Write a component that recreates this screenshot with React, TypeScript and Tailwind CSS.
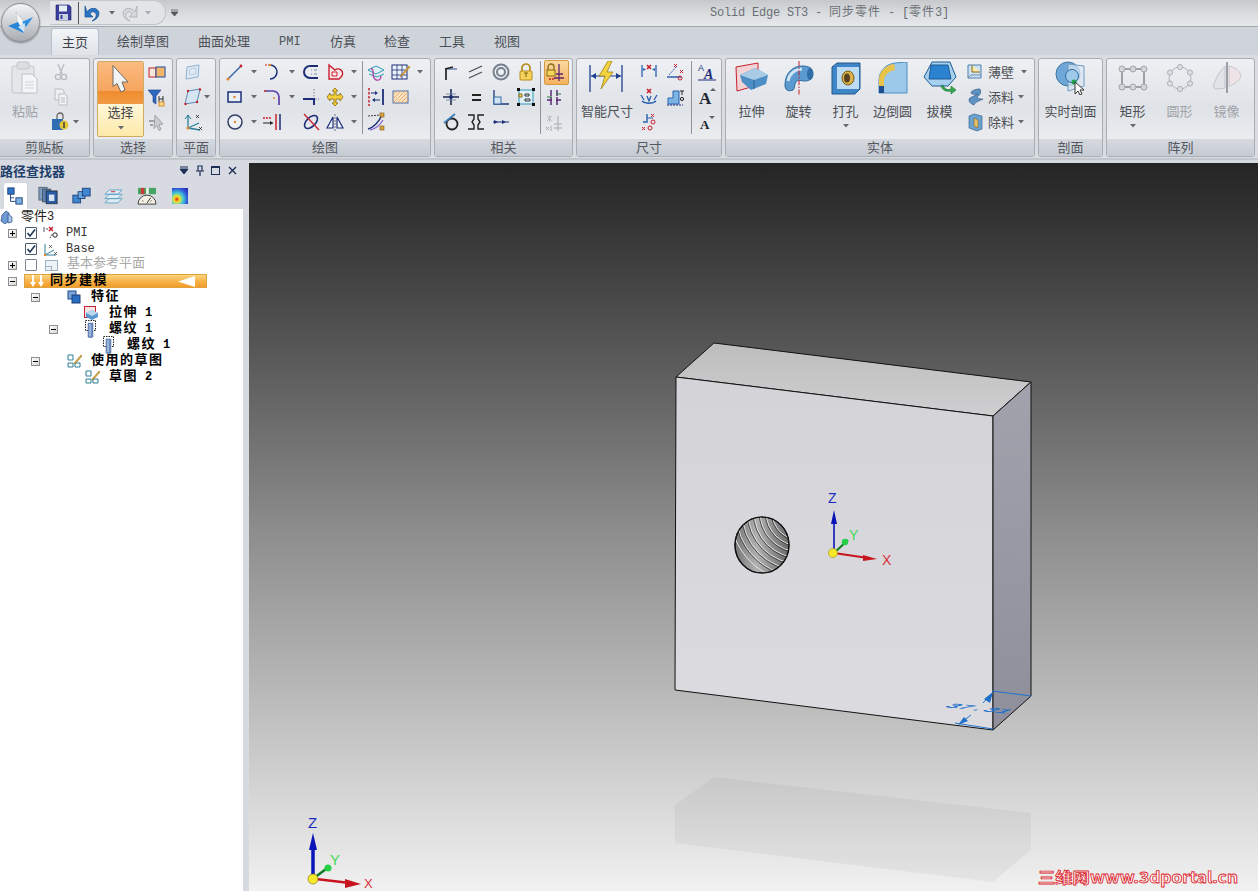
import React from "react";

const N = "#1c2f78";
const R = "#c8202c";
const O = "#e08a2e";
const G = "#b9bcc2";

const S = ({ s = 20, children }: { s?: number; children: React.ReactNode }) => (
  <svg width={s} height={s} viewBox={`0 0 ${s} ${s}`} fill="none" className="block shrink-0">
    {children}
  </svg>
);

const Dd = ({ light }: { light?: boolean }) => (
  <svg width="6" height="4" viewBox="0 0 6 4" className="block shrink-0">
    <path d="M0 0h6L3 3.5z" fill={light ? "#a8acb2" : "#666a70"} />
  </svg>
);

const Cell = ({ c, dd, className = "" }: { c?: React.ReactNode; dd?: boolean; className?: string }) => (
  <div className={"flex h-[25px] items-center justify-start gap-[6px] " + className}>
    {c}
    {dd ? <Dd /> : null}
  </div>
);

const Col = ({ className, children }: { className: string; children: React.ReactNode }) => (
  <div className={"flex shrink-0 flex-col " + className}>{children}</div>
);

const Sep = ({ className = "" }: { className?: string }) => <div className={"mt-[2px] h-[73px] w-px shrink-0 bg-[#8e949c] " + className} />;

const Group = ({ label, className, children }: { label: string; className: string; children: React.ReactNode }) => (
  <div className={"flex h-[99px] shrink-0 flex-col overflow-hidden rounded-[3px] border border-[#a9aeb6] bg-linear-to-b from-[#eef0f3] via-[#dfe2e7] to-[#f1f2f4] " + className}>
    <div className="relative flex h-[80px]">{children}</div>
    <div className="flex h-[17px] items-center justify-center bg-linear-to-b from-[#d5d9df] to-[#c6cbd3] pb-[2px] text-[13px] leading-none text-[#55585e]">{label}</div>
  </div>
);

const Big = ({ icon, label, dd, gray, className = "w-[47px]" }: { icon: React.ReactNode; label: string; dd?: boolean; gray?: boolean; className?: string }) => (
  <div className={"flex shrink-0 flex-col items-center " + className}>
    <div className="flex h-[37px] items-center justify-center">{icon}</div>
    <div className={"mt-[7px] text-[13px] leading-[16px] whitespace-nowrap " + (gray ? "text-[#a0a3a8]" : "text-[#4d5055]")}>{label}</div>
    {dd ? <div className="mt-[5px]"><Dd /></div> : null}
  </div>
);

/* small ribbon icons */
const Ic = {
  scissors: <S><path d="M7 2l4 10M13 2L9 12" stroke={G} strokeWidth="1.4" /><circle cx="7" cy="15" r="2.6" stroke={G} strokeWidth="1.4" /><circle cx="13" cy="15" r="2.6" stroke={G} strokeWidth="1.4" /></S>,
  copy: <S><path d="M4 2h7l2 2v9H4z" fill="#eceef0" stroke={G} /><path d="M8 7h6l2 2v9H8z" fill="#f3f4f5" stroke={G} /><path d="M10 11h4M10 13h4M10 15h4" stroke={G} /></S>,
  painter: <S><rect x="1" y="7" width="11" height="11" fill="#2f6db3" /><path d="M6 7V4a3 3 0 0 1 6 0v3" stroke="#666" strokeWidth="1.3" /><circle cx="13" cy="13" r="4.5" fill="#e3c63c" /><path d="M13 10v6" stroke="#333" strokeWidth="1.4" /></S>,
  selSets: <S><rect x="2" y="6" width="7" height="9" fill="#f4e6d8" stroke={R} /><rect x="9" y="5" width="9" height="10" fill="#f2b56c" stroke="#1f4aa0" /></S>,
  funnel: <S><path d="M1 3h13L9 9v8l-3-2V9z" fill="#2f68c0" stroke="#1c3d84" strokeWidth=".6" /><path d="M12 9v6M16 9v6M12 12h4" stroke="#333" /><rect x="12" y="15" width="5" height="4" fill="#f7d98c" stroke={O} /></S>,
  grayArrow: <S><path d="M8 3l8 9-4 .5 2 5-2 1-2-5-3 3z" fill="#c9ccd1" stroke="#9ea2a8" /><path d="M2 9h5M3 13h3" stroke="#9ea2a8" strokeWidth="2" /></S>,
  plane1: <S><path d="M4 5l12-2-1 12-12 2z" fill="#dfe9f3" stroke="#8db1d2" /><path d="M7 7l6-1-.5 6-6 1z" stroke="#b9cfe2" /></S>,
  plane2: <S><path d="M5 4l12-2-3 13L2 17z" fill="#d6e4f1" stroke="#5a8bb9" /><circle cx="5" cy="4" r="1.2" fill={R} /><circle cx="17" cy="2.5" r="1.2" fill={R} /><circle cx="14" cy="15" r="1.2" fill={R} /><circle cx="2.5" cy="17" r="1.2" fill={R} /></S>,
  triad: <S><path d="M5 16V3M5 16l11-5M5 16l12 2" stroke="#2a7f9a" strokeWidth="1.3" /><path d="M2 7l3-4 3 4" stroke="#2a7f9a" /><circle cx="5" cy="16" r="1.6" fill={O} /><path d="M13 3l3 3M16 3l-3 3M16 15l3 3M19 15l-3 3" stroke="#222" strokeWidth=".8" /></S>,
  line: <S><path d="M3 17L16 4" stroke="#3566a8" strokeWidth="1.5" /><circle cx="3" cy="17" r="1.6" fill={O} /><circle cx="16" cy="4" r="1.4" fill={R} /></S>,
  arc: <S><path d="M2 3h5" stroke={R} strokeDasharray="2 1" /><path d="M7 3a7 7 0 0 1 0 14" stroke={N} strokeWidth="1.5" /><circle cx="7" cy="3" r="1.2" fill={O} /></S>,
  cshape: <S><path d="M17 4H9a6 6 0 0 0 0 12h8" stroke={N} strokeWidth="2" /><path d="M10 8h1M10 12h1M13 8h3M13 12h3" stroke="#7c8a9a" /></S>,
  heart: <S><path d="M4 3l6 5a4.500 4.500 0 0 1 6 7l-2 2H4z" fill="#fbe6ea" stroke={R} strokeWidth="1.4" /><path d="M7 10h5v4H7z" stroke={R} /></S>,
  rect: <S><rect x="3" y="5" width="13" height="10" fill="#eaf0f6" stroke={N} strokeWidth="1.5" /><circle cx="9.500" cy="10" r="1.300" fill={O} /></S>,
  fillet: <S><path d="M2 4h8a6 6 0 0 1 6 6v8" stroke="#5b3fa8" strokeWidth="1.7" /><circle cx="11" cy="11" r="1" fill={O} /><circle cx="2" cy="4" r="1" fill={R} /></S>,
  trim: <S><path d="M2 12h11v6" stroke={N} strokeWidth="2" /><path d="M13 2v8M14 12h4" stroke="#78808c" strokeDasharray="1.500 1.500" /></S>,
  move: <S><path d="M10 1l3 3h-2v4h4V6l3 4-3 4v-2h-4v4h2l-3 3-3-3h2v-4H5v2l-3-4 3-4v2h4V4H7z" fill="#f4cf3a" stroke="#8c6d12" strokeWidth=".8" /></S>,
  circle: <S><circle cx="10" cy="10" r="7" fill="#eef2f6" stroke="#333f66" strokeWidth="1.5" /><circle cx="10" cy="10" r="1.200" fill={O} /></S>,
  offset: <S><path d="M0 6h9" stroke={R} strokeWidth="1.500" strokeDasharray="2 1" /><path d="M0 11h10" stroke="#222" strokeWidth="1.200" /><path d="M7 9l3 2-3 2z" fill="#222" /><path d="M13 2v16" stroke={R} strokeWidth="1.500" /><path d="M17 2v16" stroke={N} strokeWidth="1.500" /></S>,
  xout: <S><ellipse cx="10" cy="10" rx="8" ry="4.500" transform="rotate(-45 10 10)" stroke={N} strokeWidth="1.600" /><path d="M3 2l15 16" stroke={R} strokeWidth="1.300" /></S>,
  mirror: <S><path d="M8 5v11H2zM12 5v11h6z" stroke={N} strokeWidth="1.200" fill="#eef2f7" /><path d="M10 2v17" stroke="#6b7280" strokeDasharray="2 1" /></S>,
  sketchp: <S><path d="M2 8l8-4 8 4-8 4z" fill="#dff0f4" stroke="#2e9ab5" /><path d="M3 12l8 3 7-3" stroke="#2e9ab5" /><path d="M5 6c5 3-1 8 5 12 4 1 5-2 5-4" stroke="#b33fa8" strokeWidth="1.300" /></S>,
  table: <S><rect x="1" y="3" width="15" height="14" fill="#eef4fb" stroke={N} /><path d="M1 8h15M1 13h15M6 3v14M11 3v14" stroke={N} strokeWidth=".8" /><path d="M18 4l-7 8-2 3 3-2 7-8z" fill="#eab33f" stroke="#9c6b12" strokeWidth=".6" /></S>,
  project: <S><path d="M3 1v18" stroke={R} strokeWidth="1.500" strokeDasharray="2.500 1.500" /><path d="M17 2v16" stroke={N} strokeWidth="1.800" /><path d="M5 6h5M14 13H8" stroke={N} strokeWidth="1.200" /><path d="M9 4l3 2-3 2zM9 11l-3 2 3 2z" fill={N} /></S>,
  hatch: <S><rect x="2" y="4" width="15" height="12" fill="#f8e2bd" stroke="#4a6fa5" /><path d="M2 8l4-4M2 12l8-8M2 16l12-12M6 16l11-11M10 16l7-7M14 16l3-3" stroke="#e0a168" strokeWidth=".8" /></S>,
  curve: <S><path d="M2 17C7 16 13 10 16 3" stroke={N} strokeWidth="1.500" /><path d="M4 18c6-1 10-5 13-10" stroke="#8c6bd0" strokeWidth="1.400" /><path d="M2 4l13-1" stroke="#3a3f4a" strokeDasharray="2 1" /><rect x="14" y="1" width="4" height="4" fill="#d9a13f" stroke="#7a5a10" strokeWidth=".6" /><rect x="14" y="14" width="4" height="4" fill="#d9a13f" stroke="#7a5a10" strokeWidth=".6" /></S>,
  r1: <S><path d="M5 18V7" stroke="#222" strokeWidth="1.700" /><path d="M5 7h11" stroke="#2d4f96" strokeWidth="1.200" /><path d="M4 7l8-2" stroke="#222" strokeWidth="1.300" /></S>,
  r2: <S><path d="M3 10L16 4M3 16L16 10" stroke="#4b4f57" strokeWidth="1.300" /></S>,
  r3: <S><circle cx="10" cy="10" r="7.500" stroke="#77808f" strokeWidth="2" /><circle cx="10" cy="10" r="4" fill="#eef1f5" stroke="#77808f" strokeWidth="2" /></S>,
  lock: <S><path d="M6 9V6a4 4 0 0 1 8 0v3" stroke="#b68a1a" strokeWidth="1.700" /><rect x="4" y="9" width="12" height="9" rx="1" fill="#f6d259" stroke="#b68a1a" /><path d="M10 11v4M8 11h4" stroke="#7a5a10" /></S>,
  lockrel: <S><path d="M3 7V4a3 3 0 0 1 6 0v3" stroke="#8a6a14" strokeWidth="1.300" /><rect x="2" y="7" width="8" height="6" fill="#f4d65a" stroke="#8a6a14" /><path d="M14 1v17M9 15h10M11 11h7" stroke="#5a2a72" strokeWidth="1.300" /><path d="M4 16h6" stroke={R} strokeDasharray="2 1" strokeWidth="1.300" /></S>,
  r4: <S><path d="M10 2v16M2 10h16" stroke="#1d2a52" strokeWidth="1.600" /><circle cx="10" cy="10" r="2" fill={N} /><path d="M5 7h10M5 13h10" stroke="#6f7c9c" strokeWidth=".8" /></S>,
  eq: <S><path d="M6 8h9M6 13h9" stroke="#222" strokeWidth="2.200" /></S>,
  r5: <S><path d="M3 3v14h15" stroke="#1d3a7a" strokeWidth="1.300" /><rect x="3" y="10" width="7" height="7" fill="#cfe3f2" stroke="#3a6ea5" /></S>,
  rr6: <S><rect x="3" y="3" width="14" height="14" fill="#dff0f8" stroke="#2e9ab5" /><rect x="1" y="1" width="3" height="3" fill="#111" /><rect x="16" y="1" width="3" height="3" fill="#111" /><rect x="1" y="16" width="3" height="3" fill="#111" /><rect x="16" y="16" width="3" height="3" fill="#111" /><path d="M3 8v-1h3v3H3z" fill="#f4d65a" stroke="#8a6a14" /><path d="M9 7h4v2H9zM9 12h5v2H9z" stroke="#333" /></S>,
  tang: <S><circle cx="11" cy="12" r="5.500" stroke="#222" strokeWidth="1.800" /><path d="M3 11L14 2" stroke="#3f7fb5" strokeWidth="1.800" /></S>,
  sym: <S><path d="M2 3h6v4L6 10l2 3v4H2M18 3h-6v4l2 3-2 3v4h6" stroke="#222" strokeWidth="1.400" /></S>,
  colin: <S><path d="M2 10h16" stroke={N} strokeWidth="1.200" /><path d="M3 8l4 2-4 2zM11 8l4 2-4 2z" fill={N} /></S>,
  rel2: <S><path d="M7 2v6M13 2v6M3 12h5M12 12h5M7 9v8M13 9v8" stroke="#5a2a72" strokeWidth="1.500" /><path d="M3 9h5M12 6h5" stroke="#2a7d3a" /></S>,
  rel3: <S><path d="M14 3v15M10 11h8M10 15h8" stroke="#a6a9b0" /><path d="M3 3l5 5M8 3l-5 5M5.500 2v7" stroke="#b8bbc0" /><path d="M2 14l3 3M5 14l-3 3M7 13v5" stroke="#a6a9b0" /></S>,
  d1: <S><path d="M3 3v12M17 3v12" stroke="#2b60b0" strokeWidth="1.300" /><path d="M4 6l3 1.500-3 1.500zM16 6l-3 1.500 3 1.500z" fill="#2b60b0" /><path d="M8 3l4 4M12 3L8 7" stroke={R} strokeWidth="1.600" /></S>,
  d2: <S><path d="M2 15h14" stroke="#2b60b0" strokeWidth="1.300" /><path d="M4 13L12 4" stroke="#2b60b0" strokeDasharray="2 1" /><path d="M9 2l3 3M12 2L9 5M15 8l3 3M18 8l-3 3" stroke={R} /><circle cx="15" cy="16" r="2" stroke={R} /></S>,
  d3: <S><path d="M3 14c3 3 11 3 14 0" stroke="#2b60b0" strokeWidth="1.300" /><path d="M2 8l3 5M18 8l-3 5M8 9l2 5 2-5" stroke="#2b60b0" strokeWidth="1.300" /><path d="M8 2l4 4M12 2L8 6" stroke={R} strokeWidth="1.600" /></S>,
  d4: <S><path d="M3 17V11h5V4h6v13z" fill="#7cb5e4" stroke="#2b60b0" /><path d="M2 18h16" stroke={N} strokeDasharray="2 1" /><path d="M15 4h4M17 4v4" stroke="#222" /><circle cx="17" cy="12" r="1.600" stroke="#222" /></S>,
  d5: <S><path d="M8 2v8H4" stroke="#2b60b0" strokeWidth="1.400" /><path d="M8 6h6" stroke="#2b60b0" /><path d="M12 2l3 3M15 2l-3 3M3 15l3 3M6 15l-3 3" stroke={R} /><circle cx="14" cy="10" r="2" stroke={R} /><circle cx="11" cy="16" r="2" stroke={R} /></S>,
  tfont: <S><text x="1" y="9" fontSize="9" fill="#1c2f78" fontFamily="Liberation Sans">A</text><text x="7" y="17" fontSize="14" fontWeight="700" fontStyle="italic" fill="#1c2f78" fontFamily="Liberation Serif">A</text><path d="M1 18h18" stroke="#1c2f78" /></S>,
  bigA: <S><text x="2" y="17" fontSize="17" fontWeight="700" fill="#1d2430" fontFamily="Liberation Serif">A</text><path d="M13 4l3-3 3 3z" fill="#5b6470" /></S>,
  smA: <S><text x="3" y="17" fontSize="13" fontWeight="700" fill="#1d2430" fontFamily="Liberation Serif">A</text><path d="M12 4h6l-3 3z" fill="#5b6470" /></S>,
  thin: <S><path d="M2 3h13v13H2z" fill="#cfe2f2" stroke="#4b7fae" /><path d="M6 3v7h8" fill="#f6e9a8" stroke="#8a6a14" /><path d="M2 16l3-3h10" stroke="#6b8fb3" /></S>,
  add: <S><path d="M14 2c-5 0-9 2-9 4 0 1 4 2 7 1-3 2-9 3-9 6 0 2 2 4 5 5 1-3 5-4 9-6-5 0-5-1-6-2 2-1 5-4 3-8z" fill="#5f93c4" stroke="#274f78" strokeWidth=".6" /></S>,
  cut: <S><path d="M3 4l5-2 8 2v13l-5 2-8-3z" fill="#6ba2d0" stroke="#2d5d8a" strokeWidth=".6" /><path d="M8 6l4 2v8l-4-2z" fill="#e4c068" stroke="#7a5a10" strokeWidth=".5" /></S>,
};

const Gr = (id: string, a: string, b: string) => (
  <linearGradient id={id} x1="0" y1="0" x2="0" y2="1"><stop offset="0" stopColor={a} /><stop offset="1" stopColor={b} /></linearGradient>
);

const BigIc = {
  paste: <svg width="28" height="34" viewBox="0 0 28 34" fill="none" className="block"><rect x="1" y="5" width="22" height="27" rx="2" fill="#e4e6e9" stroke="#c1c4c9" /><rect x="6" y="1" width="12" height="7" rx="2" fill="#dcdfe2" stroke="#c1c4c9" /><path d="M11 13h10l5 5v14H11z" fill="#f4f5f6" stroke="#c1c4c9" /><path d="M14 21h9M14 24h9M14 27h9" stroke="#d0d3d7" /></svg>,
  cursor: <svg width="17" height="28" viewBox="0 0 17 28" className="block"><path d="M1 0.500V21.500L5 18.500L9 27L13 25L10 17H16Z" fill="#f2f3f5" stroke="#6f6a66" strokeWidth="1" /></svg>,
  dim: <svg width="36" height="34" viewBox="0 0 36 34" fill="none" className="block"><path d="M1 4v27M33 4v27" stroke="#1d3f8f" strokeWidth="1.300" /><path d="M2 15h30" stroke="#1d3f8f" /><path d="M2 15l5-3v6zM32 15l-5-3v6z" fill="#1d3f8f" /><path d="M19 0l-9 15h6l-4 13 12-17h-6l5-11z" fill="#f3d33f" stroke="#9c8216" strokeWidth=".8" /></svg>,
  extrude: <svg width="34" height="32" viewBox="0 0 34 32" fill="none" className="block"><path d="M1 5L23 1v22L2 29z" fill="#f2d3d6" stroke={R} /><path d="M5 13l15-7 13 7-2 9-15 6-9-8z" fill="#4d8ec6" /><path d="M5 13l15-7 13 7-14 5z" fill="#a9cbe6" /><path d="M19 18v9" stroke="#2f6393" /></svg>,
  revolve: <svg width="34" height="34" viewBox="0 0 34 34" fill="none" className="block"><path d="M3 24c0-12 8-19 17-19 7 0 11 2 11 8 0 4-3 7-8 7-4 0-7-2-9 1-2 2-1 7-3 8-5 2-8 0-8-5z" fill="#5b9ad0" stroke="#2b6aa0" /><path d="M6 20c1-7 7-12 14-12" stroke="#cfe4f4" strokeWidth="3" /><ellipse cx="28" cy="13" rx="3" ry="6" fill="#2f6ea8" /><path d="M17 0v34" stroke={R} strokeDasharray="5 1.500 1.500 1.500" /></svg>,
  hole: <svg width="30" height="34" viewBox="0 0 30 34" fill="none" className="block"><path d="M1 6l5-4h23v26l-5 5H1z" fill="#3f86c8" stroke="#25598a" /><path d="M6 6h22v22H6z" fill="#bcdcf4" /><ellipse cx="17" cy="17" rx="6" ry="7" fill="#d9b24b" stroke="#7a5a10" /><ellipse cx="16" cy="17" rx="3" ry="4.500" fill="#5a4320" /></svg>,
  fillet: <svg width="30" height="32" viewBox="0 0 30 32" fill="none" className="block"><path d="M1 31V18C1 9 8 2 17 1l12-1v31z" fill="#9cc8ea" stroke="#4d8fc6" /><path d="M1 31V18C1 9 8 3 16 2l1 6C11 9 6 13 6 19v12z" fill="#e9c24a" /><path d="M1 24h5v7H1z" fill="#1d4c91" /></svg>,
  draft: <svg width="34" height="34" viewBox="0 0 34 34" fill="none" className="block"><path d="M1 16L9 1h18l6 15-8 9H9z" fill="#a6d0ee" stroke="#1f5b93" /><path d="M8 4h17l3 14H6z" fill="#2b82d0" stroke="#1f5b93" /><path d="M20 24c2 5 5 5 8 4v-3l5 4-5 4v-3c-5 1-9-1-10-5z" fill="#36a853" stroke="#1c6e30" strokeWidth=".6" /></svg>,
  section: <svg width="32" height="34" viewBox="0 0 32 34" fill="none" className="block"><circle cx="13" cy="13" r="12" fill="#6fa8d8" stroke="#3f76a4" /><path d="M13 3l16 2v20l-16 5z" fill="#d8e6f2" fillOpacity=".75" stroke="#6f9dc2" /><circle cx="17" cy="15" r="6.500" fill="#9fc9e8" stroke="#2b6a9e" /><circle cx="19" cy="21" r="2.500" fill="#22a04b" /><path d="M20 21v12l3-3 2 4 2-1-2-4h4z" fill="#fff" stroke="#222" strokeWidth=".9" /></svg>,
  rectP: <svg width="30" height="26" viewBox="0 0 30 26" fill="none" className="block"><rect x="4" y="4" width="22" height="18" stroke="#55585f" /><g fill="#d2d5da" stroke="#a2a6ad"><circle cx="4" cy="4" r="3" /><circle cx="15" cy="4" r="3" /><circle cx="26" cy="4" r="3" /><circle cx="4" cy="22" r="3" /><circle cx="15" cy="22" r="3" /><circle cx="26" cy="22" r="3" /></g></svg>,
  circP: <svg width="28" height="28" viewBox="0 0 28 28" fill="none" className="block"><circle cx="14" cy="14" r="11" stroke="#b0b3b9" /><g fill="#dcdee2" stroke="#aeb1b7"><circle cx="14" cy="3" r="2.600" /><circle cx="24" cy="8.500" r="2.600" /><circle cx="24" cy="19.500" r="2.600" /><circle cx="14" cy="25" r="2.600" /><circle cx="4" cy="19.500" r="2.600" /><circle cx="4" cy="8.500" r="2.600" /></g></svg>,
  mirrorP: <svg width="32" height="32" viewBox="0 0 32 32" fill="none" className="block"><path d="M14 4v22l-8 1c-3 0-4-2-3-5 2-6 5-12 11-18z" fill="#e2e3e8" stroke="#c2c4ca" /><path d="M18 4c5 1 10 4 12 9 0 4-5 9-12 11z" fill="#eee4e8" stroke="#c9c6cc" /><path d="M16 0v31" stroke="#9b9ea4" strokeWidth="2" /></svg>,
};

/* tree */
const Exp = ({ minus, className = "" }: { minus?: boolean; className?: string }) => (
  <div className={"relative h-[9px] w-[9px] shrink-0 border border-[#8b8f95] bg-linear-to-br from-white to-[#d6d6d0] " + className}>
    <div className="absolute top-[3px] left-[1px] h-px w-[5px] bg-black" />
    {minus ? null : <div className="absolute top-[1px] left-[3px] h-[5px] w-px bg-black" />}
  </div>
);

const Chk = ({ on, className = "" }: { on?: boolean; className?: string }) => (
  <div className={"flex h-[12px] w-[12px] shrink-0 items-center justify-center rounded-[1px] border border-[#4d5a6a] bg-white " + className}>
    {on ? <svg width="10" height="10" viewBox="0 0 10 10" fill="none"><path d="M1.500 5l2.500 3 5-6.500" stroke="#1d3557" strokeWidth="1.600" /></svg> : null}
  </div>
);

const sk = (
  <svg width="15" height="14" viewBox="0 0 15 14" fill="none" className="block shrink-0"><path d="M1 1h5v5H1zM1 9h5v4H1zM8 9h5v4H8z" stroke="#2e7d96" /><path d="M14 1L8 8l-1 2 2-1 6-7z" fill="#e8b33f" stroke="#7a5a10" strokeWidth=".5" /></svg>
);
const thread = (
  <svg width="12" height="18" viewBox="0 0 12 18" fill="none" className="block shrink-0"><rect x=".5" y=".5" width="10" height="10" stroke="#222" strokeDasharray="1.500 1" /><path d="M3 3h5v14l-2.500 1L3 17z" fill="#6f8fc0" stroke="#4a6a9a" strokeWidth=".5" /><path d="M5 4v12" stroke="#c8d8ee" /></svg>
);
const fea = (
  <svg width="14" height="14" viewBox="0 0 14 14" fill="none" className="block shrink-0"><rect x="1" y="1" width="8" height="8" fill="#7fa8d8" stroke="#1f4a8a" /><rect x="5" y="5" width="8" height="8" fill="#2a6ec4" stroke="#1f3d7a" /></svg>
);

const RibbonTab = ({ children, className }: { children: React.ReactNode; className: string }) => (
  <div className={"text-[13px] leading-[28px] text-[#4d5157] whitespace-nowrap " + className}>{children}</div>
);

const treeBold = "mb-[2px] text-[13px] font-bold tracking-[1.500px] text-black whitespace-pre leading-none";
const One = ({ t }: { t: string }) => <span className="ml-[7px] font-['Liberation_Mono',monospace] text-[12px] tracking-normal">{t}</span>;

export default function App() {
  return (
    <div className="flex h-[891px] w-[1258px] flex-col overflow-hidden bg-[#d7dbe1] font-['Noto_Sans_CJK_SC',sans-serif]">
      {/* title bar */}
      <div className="relative flex h-[27px] shrink-0 items-center border-b border-[#a3a9b0] bg-linear-to-b from-[#c6c8cb] via-[#d9dcdf] to-[#e6e8ea]">
        <div className="ml-[50px] flex h-[24px] w-[116px] items-center rounded-r-[12px] border-r border-b border-[#bfc3c8] bg-[#e2e4e7] pl-[5px]">
          <svg width="17" height="17" viewBox="0 0 17 17" className="block shrink-0"><path d="M1 1h13l2 2v13H1z" fill="#3a3f9c" stroke="#1f2366" strokeWidth=".6" /><rect x="4" y="1.500" width="8" height="6" fill="#e8eef6" /><rect x="4" y="10" width="9" height="6" fill="#c9d2e0" /><rect x="5.500" y="11" width="2" height="4" fill="#3a3f9c" /></svg>
          <div className="ml-[6px] h-[22px] w-px bg-[#555]" />
          <svg width="18" height="18" viewBox="0 0 18 18" fill="none" className="ml-[5px] block shrink-0"><path d="M3 8c3-5 11-5 12 1 0 4-3 7-7 8 3-2 5-5 4-7-1-3-5-3-6 0l3 3H1V2z" fill="#2b74c4" stroke="#154d8f" strokeWidth=".7" /></svg>
          <div className="ml-[7px]"><Dd /></div>
          <svg width="18" height="18" viewBox="0 0 18 18" fill="none" className="ml-[5px] block shrink-0"><path d="M15 8C12 3 4 3 3 9c0 4 3 7 7 8-3-2-5-5-4-7 1-3 5-3 6 0l-3 3h8V2z" fill="#d5d8dc" stroke="#a9adb3" strokeWidth=".8" /></svg>
          <div className="ml-[7px]"><Dd light /></div>
        </div>
        <svg width="8" height="8" viewBox="0 0 8 8" className="ml-[5px] block shrink-0"><path d="M0 1h7M0 3h7l-3.500 4z" stroke="#555" strokeWidth=".8" fill="#555" /></svg>
        <div className="ml-[531px] font-['Liberation_Mono','Noto_Sans_CJK_SC',monospace] text-[12px] tracking-[-0.2px] whitespace-pre text-[#6b6f75]">
          {"Solid Edge ST3 - "}<span className="tracking-[1px]">同步零件</span>{" - ["}<span className="tracking-[1px]">零件</span>{"3]"}
        </div>
      </div>

      {/* app button */}
      <div className="absolute top-[3px] left-[1px] z-10 flex h-[39px] w-[39px] items-center justify-center rounded-full border border-[#8a8d92] bg-linear-to-b from-[#f4f5f6] to-[#a9adb3] shadow-[0_1px_2px_rgba(0,0,0,0.4)]">
        <svg width="27" height="24" viewBox="0 0 27 24" className="block"><path d="M9 1L18 12L11 16Z" fill="#f7f7f7" stroke="#b5b8bc" strokeWidth=".5" /><path d="M1 15L11 11L17 22Z" fill="#2a86d8" /><path d="M26 6L15 11L19 16Z" fill="#2f90e2" /><path d="M11 16L18 12L17 21Z" fill="#cfe5f7" /></svg>
      </div>

      {/* tabs */}
      <div className="flex h-[28px] shrink-0 items-end bg-[#cfd4db]">
        <div className="ml-[51px] h-[27px] w-[48px] rounded-t-[3px] border border-b-0 border-[#b7c0ca] bg-linear-to-b from-[#f2f5f8] to-[#dfe3e8] text-center text-[13px] leading-[26px] text-[#3d4046]">主页</div>
        <RibbonTab className="ml-[18px] w-[52px]">绘制草图</RibbonTab>
        <RibbonTab className="ml-[29px] w-[52px]">曲面处理</RibbonTab>
        <div className="ml-[29px] w-[22px] self-start pt-[2px] font-['Liberation_Mono',monospace] text-[12px] leading-[26px] whitespace-nowrap text-[#4d5157]">PMI</div>
        <RibbonTab className="ml-[29px] w-[26px]">仿真</RibbonTab>
        <RibbonTab className="ml-[28px] w-[26px]">检查</RibbonTab>
        <RibbonTab className="ml-[29px] w-[26px]">工具</RibbonTab>
        <RibbonTab className="ml-[29px] w-[26px]">视图</RibbonTab>
      </div>

      {/* ribbon */}
      <div className="flex h-[105px] shrink-0 gap-[3px] border-b-[2px] border-[#c3c6cb] bg-[#d9dde2] pt-[3px]">
        <Group label="剪贴板" className="w-[90px] rounded-l-none border-l-0">
          <Big gray icon={BigIc.paste} label="粘贴" className="ml-[1px] w-[48px]" />
          <Col className="ml-[2px] w-[38px]">
            <Cell c={Ic.scissors} />
            <Cell c={Ic.copy} />
            <Cell c={Ic.painter} dd className="!gap-[2px]" />
          </Col>
        </Group>
        <Group label="选择" className="w-[80px]">
          <div className="mt-[2px] ml-[3px] flex h-[76px] w-[47px] shrink-0 flex-col items-center overflow-hidden rounded-[2px] border border-[#d0ab63]">
            <div className="flex h-[42px] w-full justify-center bg-[linear-gradient(#fbbb80_0%,#f6a55e_68%,#ee8c2e_68%,#f39a45_100%)] pt-[3px]">{BigIc.cursor}</div>
            <div className="flex w-full flex-1 flex-col items-center bg-linear-to-b from-[#fff7d8] to-[#fde9a9]">
              <div className="text-[13px] leading-[16px] text-[#44474c]">选择</div>
              <div className="mt-[6px]"><Dd /></div>
            </div>
          </div>
          <Col className="ml-[3px] w-[22px]">
            <Cell c={Ic.selSets} />
            <Cell c={Ic.funnel} />
            <Cell c={Ic.grayArrow} />
          </Col>
        </Group>
        <Group label="平面" className="w-[40px]">
          <Col className="ml-[6px] w-[33px]">
            <Cell c={Ic.plane1} />
            <Cell c={Ic.plane2} dd className="!gap-[1px]" />
            <Cell c={Ic.triad} />
          </Col>
        </Group>
        <Group label="绘图" className="w-[212px]">
          <Col className="ml-[5px] w-[38px]">
            <Cell c={Ic.line} dd />
            <Cell c={Ic.rect} dd />
            <Cell c={Ic.circle} dd />
          </Col>
          <Col className="w-[38px]">
            <Cell c={Ic.arc} dd />
            <Cell c={Ic.fillet} dd />
            <Cell c={Ic.offset} />
          </Col>
          <Col className="w-[24px]">
            <Cell c={Ic.cshape} />
            <Cell c={Ic.trim} />
            <Cell c={Ic.xout} />
          </Col>
          <Col className="w-[37px]">
            <Cell c={Ic.heart} dd />
            <Cell c={Ic.move} dd />
            <Cell c={Ic.mirror} dd />
          </Col>
          <Sep />
          <Col className="ml-[3px] w-[25px]">
            <Cell c={Ic.sketchp} />
            <Cell c={Ic.project} />
            <Cell c={Ic.curve} />
          </Col>
          <Col className="w-[30px]">
            <Cell c={Ic.table} dd />
            <Cell c={Ic.hatch} />
          </Col>
        </Group>
        <Group label="相关" className="w-[139px]">
          <Col className="ml-[6px] w-[25px]"><Cell c={Ic.r1} /><Cell c={Ic.r4} /><Cell c={Ic.tang} /></Col>
          <Col className="w-[25px]"><Cell c={Ic.r2} /><Cell c={Ic.eq} /><Cell c={Ic.sym} /></Col>
          <Col className="w-[25px]"><Cell c={Ic.r3} /><Cell c={Ic.r5} /><Cell c={Ic.colin} /></Col>
          <Col className="w-[24px]"><Cell c={Ic.lock} /><Cell c={Ic.rr6} /></Col>
          <Sep />
          <Col className="ml-[3px] mt-[1px] w-[25px]">
            <Cell c={Ic.lockrel} className="justify-center rounded-[2px] border border-[#d59a3f] bg-linear-to-b from-[#fbd9a0] to-[#f5b25f]" />
            <Cell c={Ic.rel2} className="justify-center" />
            <Cell c={Ic.rel3} className="justify-center" />
          </Col>
        </Group>
        <Group label="尺寸" className="w-[146px]">
          <Big icon={BigIc.dim} label="智能尺寸" className="ml-[3px] w-[54px]" />
          <Col className="ml-[5px] w-[26px]"><Cell c={Ic.d1} /><Cell c={Ic.d3} /><Cell c={Ic.d5} /></Col>
          <Col className="w-[26px]"><Cell c={Ic.d2} /><Cell c={Ic.d4} /></Col>
          <Sep />
          <Col className="ml-[5px] w-[22px]"><Cell c={Ic.tfont} /><Cell c={Ic.bigA} /><Cell c={Ic.smA} /></Col>
        </Group>
        <Group label="实体" className="w-[310px]">
          <Big icon={BigIc.extrude} label="拉伸" className="ml-[2px] w-[47px]" />
          <Big icon={BigIc.revolve} label="旋转" />
          <Big icon={BigIc.hole} label="打孔" dd />
          <Big icon={BigIc.fillet} label="边倒圆" />
          <Big icon={BigIc.draft} label="拔模" />
          <Col className="ml-[3px]">
            <div className="flex h-[25px] items-center"><div className="flex w-[21px] shrink-0">{Ic.thin}</div><span className="ml-[1px] text-[13px] text-[#4d5055]">薄壁</span><span className="ml-[7px]"><Dd /></span></div>
            <div className="flex h-[25px] items-center"><div className="flex w-[21px] shrink-0">{Ic.add}</div><span className="ml-[1px] text-[13px] text-[#4d5055]">添料</span><span className="ml-[4px]"><Dd /></span></div>
            <div className="flex h-[25px] items-center"><div className="flex w-[21px] shrink-0">{Ic.cut}</div><span className="ml-[1px] text-[13px] text-[#4d5055]">除料</span><span className="ml-[4px]"><Dd /></span></div>
          </Col>
        </Group>
        <Group label="剖面" className="w-[65px]">
          <Big icon={BigIc.section} label="实时剖面" className="ml-[5px] w-[53px]" />
        </Group>
        <Group label="阵列" className="w-[149px]">
          <Big icon={BigIc.rectP} label="矩形" dd className="ml-[2px] w-[47px]" />
          <Big gray icon={BigIc.circP} label="圆形" />
          <Big gray icon={BigIc.mirrorP} label="镜像" />
        </Group>
      </div>

      {/* main */}
      <div className="flex min-h-0 flex-1">
        <div className="flex w-[249px] shrink-0 flex-col">
          <div className="flex h-[20px] shrink-0 items-center">
            <span className="text-[13px] leading-none font-bold text-[#1f3f6b]">路径查找器</span>
            <svg width="10" height="9" viewBox="0 0 10 9" className="ml-[114px] block"><path d="M1 1h8M1 3h8L5 8z" stroke="#1c2f56" strokeWidth="1" fill="#1c2f56" /></svg>
            <svg width="10" height="11" viewBox="0 0 10 11" fill="none" className="ml-[6px] block"><path d="M3 1h4v5H3zM1 6h8M5 6v5" stroke="#1c2f56" strokeWidth="1.200" /></svg>
            <div className="ml-[6px] h-[9px] w-[9px] border border-t-[2px] border-[#1c2f56]" />
            <svg width="9" height="9" viewBox="0 0 9 9" fill="none" className="ml-[8px] block"><path d="M1 1l7 7M8 1L1 8" stroke="#1c2f56" strokeWidth="1.400" /></svg>
          </div>
          <div className="flex h-[29px] shrink-0 items-end">
            <div className="ml-[3px] flex h-[27px] w-[25px] items-center justify-start rounded-t-[3px] border border-b-0 border-[#cfd6de] bg-white pl-[2px]">
              <svg width="18" height="20" viewBox="0 0 20 20" fill="none" className="block"><rect x="2" y="1" width="7" height="7" fill="#2f74c6" stroke="#1c3d7a" /><rect x="11" y="12" width="7" height="7" fill="#7db0e0" stroke="#1c3d7a" /><path d="M5 8v8h6M5 12h4" stroke="#1c3d7a" /></svg>
            </div>
            <div className="flex h-[27px] items-center">
              <svg width="20" height="19" viewBox="0 0 22 20" className="ml-[10px] block"><rect x="1" y="1" width="9" height="14" fill="#7d9cc0" stroke="#567" /><rect x="5" y="3" width="9" height="14" fill="#5c7fb0" stroke="#456" /><rect x="9" y="5" width="12" height="14" fill="#2a5ca8" stroke="#234" /><rect x="12" y="9" width="6" height="7" fill="#d8e4f2" /></svg>
              <svg width="19" height="18" viewBox="0 0 22 20" className="ml-[14px] block"><rect x="1" y="9" width="9" height="9" fill="#3f86d0" stroke="#1c3d7a" /><rect x="7" y="5" width="8" height="8" fill="#6aa4dc" stroke="#1c3d7a" /><rect x="12" y="1" width="9" height="9" fill="#3f86d0" stroke="#1c3d7a" /></svg>
              <svg width="19" height="18" viewBox="0 0 22 20" fill="none" className="ml-[13px] block"><path d="M6 3h15l-5 5H1zM6 8h15l-5 5H1zM6 13h15l-5 5H1z" fill="#dcebf5" stroke="#5d9dc0" /><path d="M8 5h5" stroke={R} /></svg>
              <svg width="20" height="18" viewBox="0 0 22 20" fill="none" className="ml-[14px] block"><rect x="1" y="1" width="20" height="7" fill="#47a563" /><rect x="4" y="1" width="4" height="7" fill="#c93a3a" /><rect x="10" y="1" width="3" height="7" fill="#eee" /><path d="M1 19a10 10 0 0 1 20 0z" fill="#f2efe2" stroke="#333" /><path d="M11 18l4-6M6 15l1 1M16 15l-1 1" stroke="#222" /></svg>
              <svg width="16" height="16" viewBox="0 0 18 18" className="ml-[15px] block"><defs><radialGradient id="heat" cx="0.300" cy="0.700" r="0.900"><stop offset="0" stopColor="#e01818" /><stop offset=".2" stopColor="#f2e22a" /><stop offset=".45" stopColor="#3fc8d8" /><stop offset=".75" stopColor="#2f56d8" /><stop offset="1" stopColor="#2a2ab8" /></radialGradient></defs><rect width="18" height="18" fill="url(#heat)" /></svg>
            </div>
          </div>
          <div className="min-h-0 w-[243px] flex-1 bg-white font-['Liberation_Mono','Noto_Sans_CJK_SC',monospace]">
            <div className="flex h-[16px] items-center text-[12px] text-[#222]">
              <svg width="13" height="14" viewBox="0 0 13 14" className="block shrink-0"><path d="M2 5l4-4 3 2v8l-4 3-4-3z" fill="#6f9bd4" stroke="#2a4d8a" strokeWidth=".7" /><path d="M8 4l4 3v5l-4 1z" fill="#a7c5ea" stroke="#2a4d8a" strokeWidth=".7" /></svg>
              <span className="ml-[8px]"><span className="text-[13px]">零件</span>3</span>
            </div>
            <div className="flex h-[16px] items-center text-[12px] text-[#333]">
              <Exp className="ml-[8px]" /><Chk on className="ml-[8px]" />
              <div className="ml-[6px] w-[17px] shrink-0"><svg width="15" height="14" viewBox="0 0 15 14" fill="none" className="block"><path d="M1 1v5M3 3h2" stroke="#456" /><path d="M6 1l4 4M10 1L6 5" stroke={R} strokeWidth="1.500" /><path d="M7 12l2-4" stroke="#222" strokeDasharray="1 1" /><circle cx="12" cy="9" r="2.200" stroke="#222" /></svg></div>
              <span className="ml-[6px]">PMI</span>
            </div>
            <div className="flex h-[16px] items-center text-[12px] text-[#333]">
              <Chk on className="ml-[25px]" />
              <div className="ml-[6px] w-[17px] shrink-0"><svg width="15" height="14" viewBox="0 0 15 14" fill="none" className="block"><path d="M2 13V2M2 13l9-5M2 13l11 0" stroke="#2a7f9a" /><path d="M6 3l3 3M9 3L6 6M11 10l3 3M14 10l-3 3" stroke="#333" strokeWidth=".7" /><circle cx="2" cy="13" r="1.200" fill={O} /></svg></div>
              <span className="ml-[6px]">Base</span>
            </div>
            <div className="flex h-[16px] items-center text-[13px] text-[#a9a9a9]">
              <Exp className="ml-[8px]" /><Chk className="ml-[8px] border-[#7a8491]" />
              <div className="ml-[8px] h-[11px] w-[13px] shrink-0 border border-[#9db2c7] bg-[#eef3f8]"><div className="mt-[5px] h-[4px] w-[6px] border-t border-r border-[#9db2c7]" /></div>
              <span className="mb-[2px] ml-[9px]">基本参考平面</span>
            </div>
            <div className="flex h-[16px] items-center">
              <Exp minus className="ml-[8px]" />
              <div className="relative ml-[7px] flex h-[14px] w-[183px] items-center border border-[#e0a23e] bg-linear-to-b from-[#fbd47d] via-[#f8b44a] to-[#f29c28]">
                <svg width="14" height="12" viewBox="0 0 14 12" className="ml-[5px] block shrink-0"><path d="M2 0h2v7h2l-3 5-3-5h2zM10 0h2v7h2l-3 5-3-5h2z" fill="#fff" /></svg>
                <span className={treeBold + " ml-[6px]"}>同步建模</span>
                <svg width="18" height="11" viewBox="0 0 18 11" className="absolute top-[1px] right-[10px] block"><path d="M0 5.500L17 0v11z" fill="#fff" /></svg>
              </div>
            </div>
            <div className="flex h-[16px] items-center">
              <Exp minus className="ml-[31px]" /><div className="ml-[27px]">{fea}</div><span className={treeBold + " ml-[10px]"}>特征</span>
            </div>
            <div className="flex h-[16px] items-center">
              <div className="ml-[84px]"><svg width="15" height="14" viewBox="0 0 15 14" fill="none" className="block shrink-0"><rect x=".5" y=".5" width="11" height="11" fill="#f6e4e6" stroke={R} /><path d="M2 7l6-3 6 3v4l-6 3-6-3z" fill="#5b96cc" /><path d="M2 7l6-3 6 3-6 3z" fill="#bcd7ee" /></svg></div>
              <span className={treeBold + " ml-[10px]"}>拉伸<One t="1" /></span>
            </div>
            <div className="flex h-[16px] items-center">
              <Exp minus className="ml-[49px]" /><div className="ml-[27px]">{thread}</div><span className={treeBold + " ml-[12px]"}>螺纹<One t="1" /></span>
            </div>
            <div className="flex h-[16px] items-center">
              <div className="ml-[103px]">{thread}</div><span className={treeBold + " ml-[12px]"}>螺纹<One t="1" /></span>
            </div>
            <div className="flex h-[16px] items-center">
              <Exp minus className="ml-[31px]" /><div className="ml-[27px]">{sk}</div><span className={treeBold + " ml-[9px]"}>使用的草图</span>
            </div>
            <div className="flex h-[16px] items-center">
              <div className="ml-[85px]">{sk}</div><span className={treeBold + " ml-[9px]"}>草图<One t="2" /></span>
            </div>
          </div>
        </div>

        {/* viewport */}
        <div className="relative mt-[3px] min-w-0 flex-1 bg-linear-to-b from-[#252525] via-[#8c8c8c] to-[#f1f1f1]">
          <svg className="absolute inset-0 block h-full w-full" viewBox="249 163 1009 728" fill="none">
            <defs>
              {Gr("topF", "#bdbdbe", "#cfcfd1")}
              {Gr("frontF", "#d4d4d8", "#dcdce0")}
              {Gr("sideF", "#a2a2ad", "#8f8f9b")}
              <linearGradient id="holeG" x1="0" y1="0" x2="1" y2="0"><stop offset="0" stopColor="#767676" /><stop offset=".4" stopColor="#b0b0b0" /><stop offset="1" stopColor="#6a6a6a" /></linearGradient>
              <clipPath id="holeC"><ellipse cx="762" cy="545" rx="27" ry="28" /></clipPath>
            </defs>
            {/* reflection */}
            <path d="M675 805L714 777L1031 813V850L993 882L675 843Z" fill="#000" fillOpacity=".04" />
            {/* block */}
            <path d="M676 377L714 343L1031 382L993 416Z" fill="url(#topF)" stroke="#111" />
            <path d="M676 377L993 416V730L675 690Z" fill="url(#frontF)" stroke="#111" />
            <path d="M993 416L1031 382V696L993 730Z" fill="url(#sideF)" stroke="#111" />
            {/* hole */}
            <ellipse cx="762" cy="545" rx="27" ry="28" fill="url(#holeG)" stroke="#111" strokeWidth="1.200" />
            <g clipPath="url(#holeC)" stroke="#e6e6e6" strokeWidth="1">
              <circle cx="800" cy="512" r="22" />
              <circle cx="800" cy="512" r="28" />
              <circle cx="800" cy="512" r="34" />
              <circle cx="800" cy="512" r="40" />
              <circle cx="800" cy="512" r="46" />
              <circle cx="800" cy="512" r="52" />
              <circle cx="800" cy="512" r="58" />
              <circle cx="800" cy="512" r="64" />
              <circle cx="800" cy="512" r="70" />
            </g>
            <g clipPath="url(#holeC)" stroke="#2a2a2a" strokeWidth=".7">
              <circle cx="800" cy="512" r="23" />
              <circle cx="800" cy="512" r="29" />
              <circle cx="800" cy="512" r="35" />
              <circle cx="800" cy="512" r="41" />
              <circle cx="800" cy="512" r="47" />
              <circle cx="800" cy="512" r="53" />
              <circle cx="800" cy="512" r="59" />
              <circle cx="800" cy="512" r="65" />
            </g>
            <ellipse cx="762" cy="545" rx="27" ry="28" stroke="#111" strokeWidth="1.200" />
            {/* triad 1 */}
            <path d="M834 553V522" stroke="#0a14b8" strokeWidth="1.600" />
            <path d="M834 510l3 14h-6z" fill="#0a14b8" />
            <path d="M834 553L848 540" stroke="#0f7a22" strokeWidth="2" />
            <circle cx="845" cy="542" r="3.200" fill="#25d047" />
            <path d="M834 553L868 558" stroke="#c8141e" strokeWidth="1.800" />
            <path d="M877 559l-14-4v6z" fill="#c8141e" />
            <circle cx="833" cy="553" r="4.500" fill="#f5e82a" stroke="#a09010" strokeWidth=".6" />
            <text x="828" y="503" fontSize="14" fill="#1a2cc0" fontFamily="Liberation Sans">Z</text>
            <text x="849" y="540" fontSize="14" fill="#45d65a" fontFamily="Liberation Sans">Y</text>
            <text x="882" y="565" fontSize="14" fill="#d8303a" fontFamily="Liberation Sans">X</text>
            {/* triad 2 */}
            <path d="M313 879V846" stroke="#0a14b8" strokeWidth="3.500" />
            <path d="M313 833l4 17h-8z" fill="#0a14b8" />
            <path d="M314 878L330 866" stroke="#0f7a22" strokeWidth="2.500" />
            <circle cx="328" cy="868" r="3.500" fill="#25d047" />
            <path d="M316 879L350 883" stroke="#c8141e" strokeWidth="2.500" />
            <path d="M361 884l-16-5v9z" fill="#c8141e" />
            <circle cx="313" cy="879" r="5" fill="#f5e82a" stroke="#8c8010" strokeWidth=".7" />
            <text x="308" y="828" fontSize="15" fill="#1a2cc0" fontFamily="Liberation Sans">Z</text>
            <text x="330" y="865" fontSize="15" fill="#45d65a" fontFamily="Liberation Sans">Y</text>
            <text x="364" y="888" fontSize="13" fill="#d8303a" fontFamily="Liberation Sans">X</text>
            {/* dimension */}
            <path d="M955 723L993 729M992 691L1031 696M983 703L992 693M962 722L971 715" stroke="#2272cc" strokeWidth="1" />
            <path d="M993 692l-3 11-6-4zM958 725l6-8 4 4z" fill="#1f6fc8" />
            <text fontSize="12" fontWeight="700" fill="#2272cc" fontFamily="Liberation Mono" transform="translate(943 707) rotate(6) scale(1.750 .6) skewX(-35)">37.31</text>
            {/* watermark */}
            <text x="1038" y="883" fontSize="15" fontWeight="700" fill="#fff" stroke="#dc2830" strokeWidth=".8" textLength="200" lengthAdjust="spacingAndGlyphs" fontFamily="Noto Sans CJK SC, Liberation Sans, sans-serif">三维网www.3dportal.cn</text>
          </svg>
        </div>
      </div>
    </div>
  );
}
